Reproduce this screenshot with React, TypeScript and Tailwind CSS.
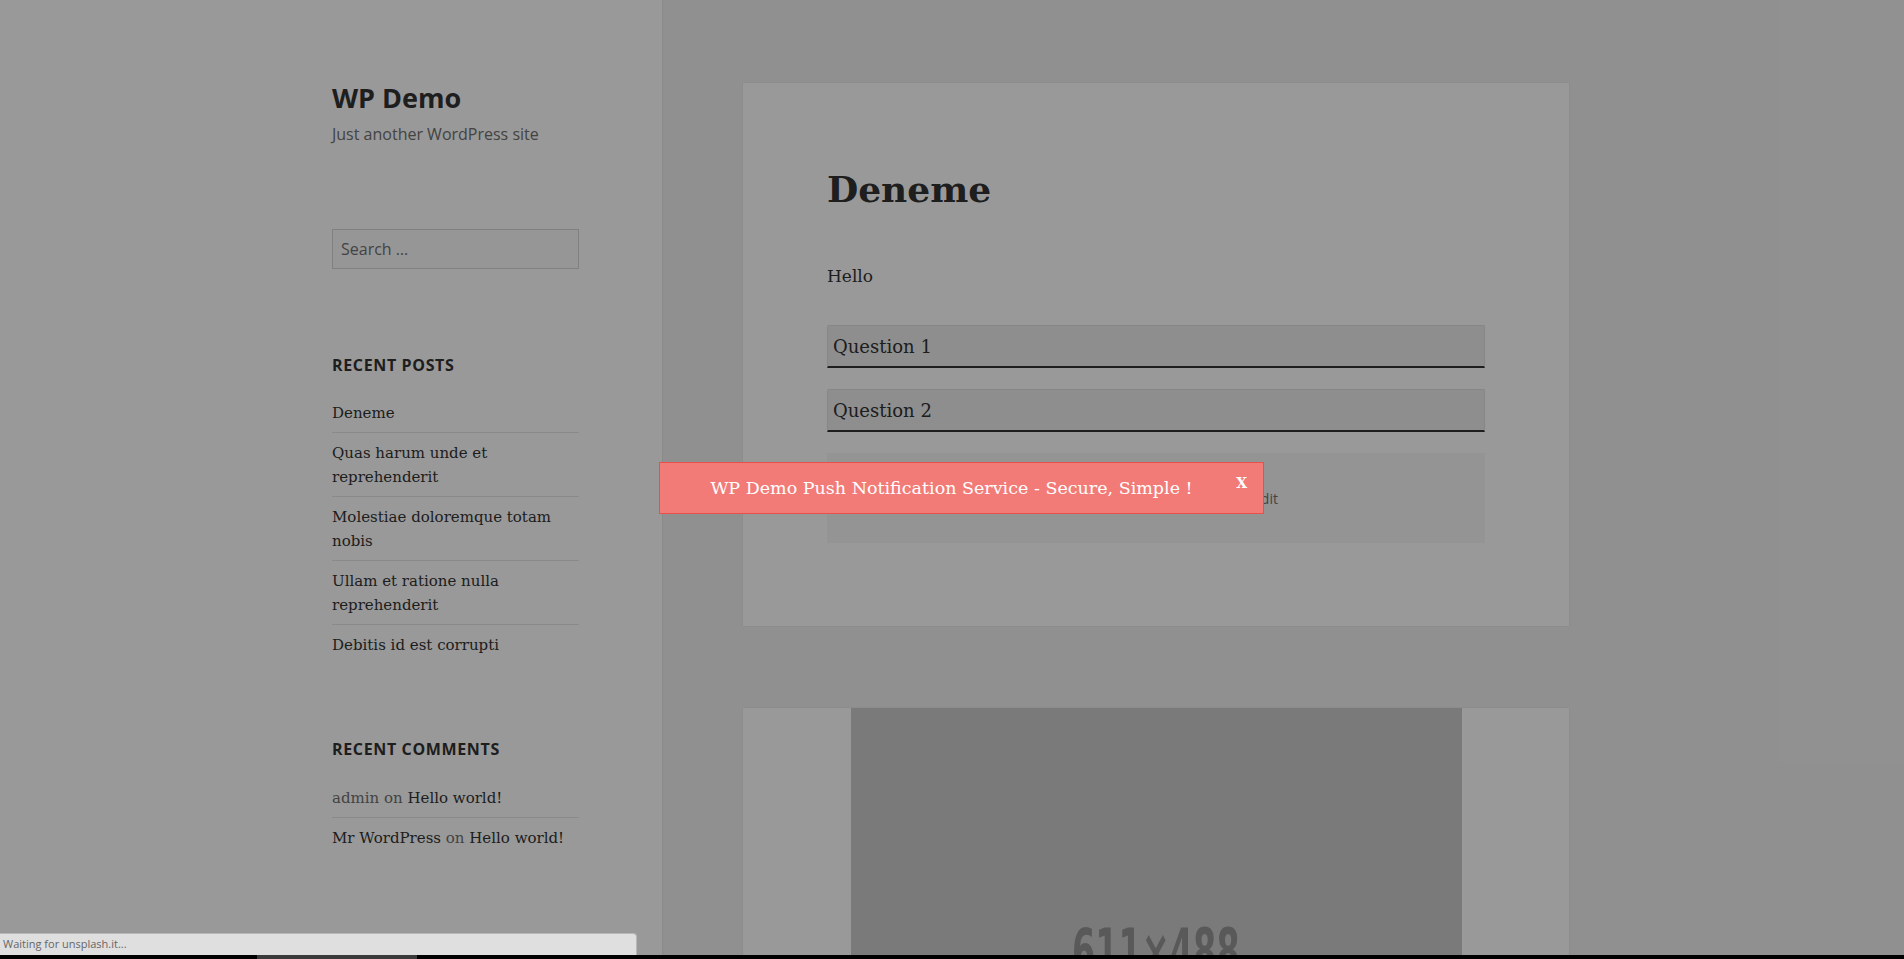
import React from 'react';

const serif = "font-['DejaVu_Serif',serif]";
const sans = "font-['Open_Sans',sans-serif]";

const recentPosts = [
  'Deneme',
  'Quas harum unde et reprehenderit',
  'Molestiae doloremque totam nobis',
  'Ullam et ratione nulla reprehenderit',
  'Debitis id est corrupti',
];

function Sidebar() {
  return (
    <aside className="w-[662px] shrink-0 bg-white shadow-[0_0_1px_rgba(0,0,0,0.25)] relative">
      <div className="pl-[332px] pr-[83px] pt-[80px]">
        <h1 className={`${sans} text-[27px] font-bold leading-[36px] text-[#333]`}>WP Demo</h1>
        <p className={`${sans} text-[16px] leading-[24px] text-[#707070] mt-[6px]`}>Just another WordPress site</p>

        <div className="mt-[83px] h-[40px] border border-[#d6d6d6] bg-[rgba(0,0,0,0.02)] flex items-center px-[8px]">
          <span className={`${sans} text-[16px] text-[#707070]`}>Search …</span>
        </div>

        <h2 className={`${sans} mt-[84px] text-[16px] font-bold uppercase tracking-[0.04em] leading-[24px] text-[#333]`}>
          Recent Posts
        </h2>
        <ul className="mt-[16px]">
          {recentPosts.map((p, i) => (
            <li
              key={p}
              className={`${serif} text-[15px] leading-[24px] text-[#333] pt-[8px] ${i < recentPosts.length - 1 ? 'pb-[7px] border-b border-[#e6e6e6]' : 'pb-[8px]'}`}
            >
              {p}
            </li>
          ))}
        </ul>

        <h2 className={`${sans} mt-[72px] text-[16px] font-bold uppercase tracking-[0.04em] leading-[24px] text-[#333]`}>
          Recent Comments
        </h2>
        <ul className={`${serif} mt-[17px] text-[15px] leading-[24px]`}>
          <li className="pt-[8px] pb-[7px] border-b border-[#e6e6e6] text-[#707070]">
            admin on <span className="text-[#333]">Hello world!</span>
          </li>
          <li className="py-[8px] text-[#707070]">
            <span className="text-[#333]">Mr WordPress</span> on <span className="text-[#333]">Hello world!</span>
          </li>
        </ul>
      </div>
    </aside>
  );
}

function QuestionField({ label }: { label: string }) {
  return (
    <div className="h-[43px] bg-[#ededed] border border-[#e0e0e0] border-b-2 border-b-[#333] rounded-t-[2px] flex items-center px-[5px]">
      <span className={`${serif} text-[18px] text-[#333]`}>{label}</span>
    </div>
  );
}

function Main() {
  return (
    <main className="flex-1 pl-[81px] pt-[83px]">
      <article className="w-[826px] bg-white shadow-[0_0_1px_rgba(0,0,0,0.2)] px-[84px] pt-[82px] pb-[83px]">
        <h2 className={`${serif} text-[36px] font-bold leading-[48px] text-[#333]`}>Deneme</h2>
        <p className={`${serif} text-[17px] leading-[24px] text-[#333] mt-[51px]`}>Hello</p>
        <div className="mt-[37px] flex flex-col gap-[21px]">
          <QuestionField label="Question 1" />
          <QuestionField label="Question 2" />
        </div>
        <footer className="mt-[21px] h-[90px] bg-[rgba(0,0,0,0.03)] flex items-center pl-[294px]">
          <span className={`${sans} text-[14px] text-[#707070]`}>October 28, 2016</span>
          <span className={`${sans} text-[14px] text-[#707070] ml-[20px]`}>Edit</span>
        </footer>
      </article>

      <article className="w-[826px] mt-[82px] bg-white shadow-[0_0_1px_rgba(0,0,0,0.2)] flex justify-center">
        <div className="w-[611px] h-[488px] bg-[#cccccc] flex items-center justify-center">
          <span className="font-['DejaVu_Sans_Condensed','DejaVu_Sans',sans-serif] font-bold text-[62px] leading-none text-[#959595] scale-x-[0.6]">
            611×488
          </span>
        </div>
      </article>
    </main>
  );
}

function Notification() {
  return (
    <div className="absolute left-[659px] top-[462px] z-20 w-[605px] h-[52px] bg-[#f27b77] border border-[#e8504a] flex items-center justify-center">
      <span className={`${serif} text-[17.5px] text-white pr-[20px]`}>
        WP Demo Push Notification Service - Secure, Simple !
      </span>
      <button className={`${serif} absolute right-[16px] top-[13px] text-[14px] font-bold leading-none text-white`}>X</button>
    </div>
  );
}

export default function App() {
  return (
    <div className="relative h-[959px] w-full overflow-hidden bg-[#f1f1f1]">
      <div className="flex min-h-full">
        <Sidebar />
        <Main />
      </div>

      <div className="absolute inset-0 z-10 bg-black/40" />
      <Notification />

      <div className="absolute left-0 bottom-[4px] z-30 w-[637px] h-[22px] bg-[#dfdfdf] border-t border-r border-[#b8b8b8] rounded-tr-[4px] flex items-center px-[3px]">
        <span className={`${sans} text-[11px] text-[#666]`}>Waiting for unsplash.it...</span>
      </div>
      <div className="absolute left-0 bottom-0 z-30 w-full h-[4px] bg-black">
        <div className="ml-[257px] w-[160px] h-full bg-[#3a3a3a]" />
      </div>
    </div>
  );
}
